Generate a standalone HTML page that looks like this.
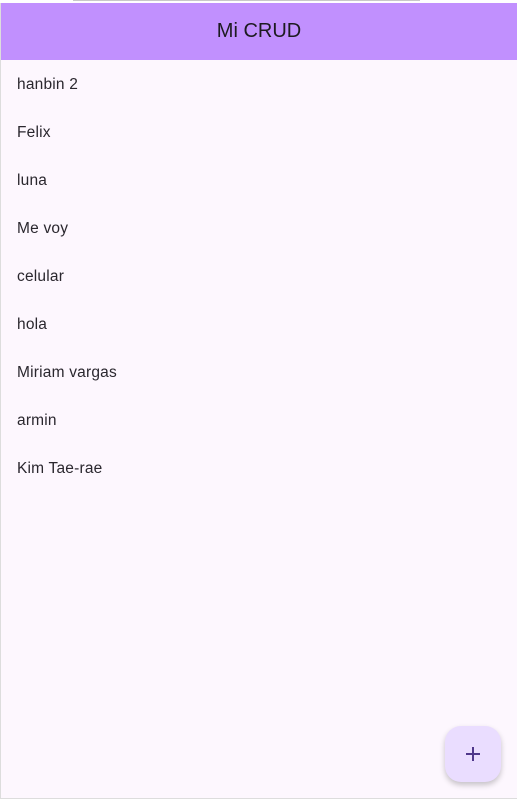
<!DOCTYPE html>
<html><head><style>
html,body{margin:0;padding:0;width:517px;height:800px;overflow:hidden;background:#fff;font-family:"Liberation Sans",sans-serif}
.topline{position:absolute;left:73px;top:0;width:347px;height:1px;background:#c8c8c8}
.frame{position:absolute;left:0;top:3px;width:516px;height:795px;border-left:1px solid #ddd;border-bottom:1px solid #ddd;background:#fdf7fe}
.bar{height:57px;background:#c190fe;display:flex;align-items:center;justify-content:center;font-size:20px;color:#1d1b20}
.item{height:48px;line-height:48px;padding-left:16px;font-size:15.5px;color:#2a272e;letter-spacing:.2px}
.list{padding-top:1px}
.fab{position:absolute;left:445px;top:726px;width:56px;height:56px;border-radius:16px;background:#eaddff;box-shadow:0 3px 6px rgba(0,0,0,.22);}
.fab:before{content:"";position:absolute;left:21px;top:27px;width:14px;height:2px;background:#4f378b}
.fab:after{content:"";position:absolute;left:27px;top:21px;width:2px;height:14px;background:#4f378b}
</style></head><body>
<div class="topline"></div>
<div class="frame">
<div class="bar">Mi CRUD</div>
<div class="list">
<div class="item">hanbin 2</div>
<div class="item">Felix</div>
<div class="item">luna</div>
<div class="item">Me voy</div>
<div class="item">celular</div>
<div class="item">hola</div>
<div class="item">Miriam vargas</div>
<div class="item">armin</div>
<div class="item">Kim Tae-rae</div>
</div>
</div>
<div class="fab"></div>
</body></html>
